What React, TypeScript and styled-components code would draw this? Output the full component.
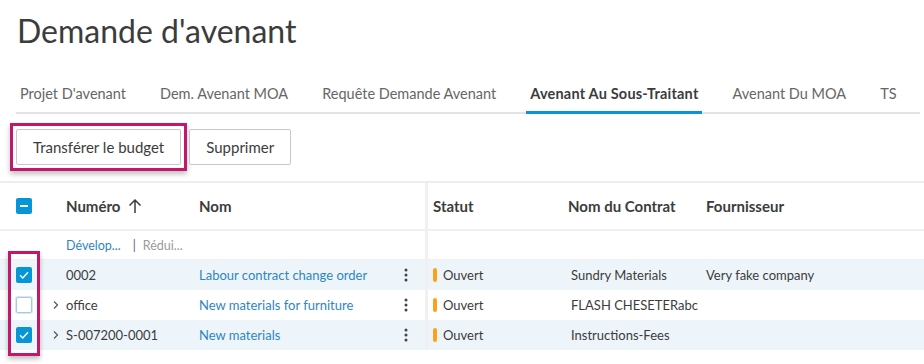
import React from 'react';
import styled, { createGlobalStyle } from 'styled-components';

const GlobalStyle = createGlobalStyle`
    body {
        margin: 0;
        background: #ffffff;
        font-family: Lato, "Noto Sans", sans-serif;
        color: #3c3c3c;
    }
`;

const COLS = '48px 16px 133px 198px 30px 3px 138px 138px 1fr';

const Page = styled.div`
    width: 924px;
    height: 364px;
    overflow: hidden;
    position: relative;
`;

const Title = styled.h1`
    margin: 0;
    padding: 11px 0 0 17px;
    font-size: 32px;
    line-height: 40px;
    font-weight: 400;
    color: #3c3c3c;
`;

const Tabs = styled.div`
    display: flex;
    margin: 28px 4px 0 16px;
    border-bottom: 2px solid #e3e3e3;
    height: 33px;
`;

const Tab = styled.div<{ active?: boolean }>`
    padding: 0 4px;
    margin-right: 26px;
    font-size: 14.5px;
    line-height: 30px;
    font-weight: ${p => (p.active ? 700 : 400)};
    letter-spacing: ${p => (p.active ? '0.2px' : '0')};
    color: ${p => (p.active ? '#3c3c3c' : '#666666')};
    border-bottom: 3px solid ${p => (p.active ? '#0696d7' : 'transparent')};
    margin-bottom: -2px;
    white-space: nowrap;
`;

const Toolbar = styled.div`
    display: flex;
    align-items: flex-start;
    gap: 2px;
    padding: 9px 0 0 10px;
    height: 67px;
    box-sizing: border-box;
`;

const Highlight = styled.div`
    border: 3px solid #c2186b;
    padding: 3px;
    box-shadow: 0 3px 5px rgba(0, 0, 0, 0.25);
`;

const Button = styled.button`
    height: 36px;
    padding: 0 16px;
    background: #ffffff;
    border: 1px solid #c8c8c8;
    border-radius: 2px;
    font-family: inherit;
    font-size: 15px;
    color: #3c3c3c;
`;

const PlainButton = styled(Button)`
    margin-top: 6px;
`;

const Table = styled.div`
    position: relative;
    border-top: 2px solid #eeeeee;
`;

const Row = styled.div<{ selected?: boolean; height: number }>`
    display: grid;
    grid-template-columns: ${COLS};
    align-items: center;
    height: ${p => p.height}px;
    background: ${p => (p.selected ? '#edf5fb' : '#ffffff')};
    font-size: 13px;
`;

const HeadRow = styled(Row)`
    font-weight: 700;
    font-size: 15px;
    border-bottom: 2px solid #f0f0f0;
`;

const ToolsRow = styled(Row)`
    font-size: 12.5px;
    border-bottom: 1px solid #f0f0f0;
`;

const Cell = styled.div`
    display: flex;
    align-items: center;
    white-space: nowrap;
    overflow: hidden;
    padding-left: 2px;
`;

const CheckCell = styled.div`
    display: flex;
    padding-left: 16px;
`;

const Divider = styled.div`
    align-self: stretch;
    background: #f0f0f0;
`;

const Check = styled.div<{ state: 'on' | 'off' | 'some' }>`
    width: 16px;
    height: 16px;
    box-sizing: border-box;
    border-radius: 2px;
    display: flex;
    align-items: center;
    justify-content: center;
    background: ${p => (p.state === 'off' ? '#ffffff' : '#0696d7')};
    border: ${p => (p.state === 'off' ? '1px solid #a9c9de' : 'none')};
    box-shadow: ${p => (p.state === 'off' ? '0 0 0 1px #d6e9f5' : 'none')};
`;

const Link = styled.span<{ muted?: boolean }>`
    color: ${p => (p.muted ? '#9a9a9a' : '#2e86c1')};
`;

const Sep = styled.span`
    color: #666;
    margin: 0 7px 0 12px;
`;

const StatusBar = styled.span`
    width: 4px;
    height: 14px;
    border-radius: 2px;
    background: #faa21b;
    margin: 0 6px 0 3px;
`;

const Kebab = styled.div`
    display: flex;
    justify-content: flex-start;
    padding-left: 9px;
`;

const Frame = styled.div`
    position: absolute;
    left: 8px;
    top: 68px;
    width: 32px;
    height: 105px;
    box-sizing: border-box;
    border: 3px solid #c2186b;
    box-shadow: 0 3px 5px rgba(0, 0, 0, 0.25);
`;

const CheckMark = () => (
    <svg width="12" height="12" viewBox="0 0 12 12">
        <path d="M2 6.2 L4.8 9 L10 3.2" fill="none" stroke="#fff" strokeWidth="1.4" />
    </svg>
);

const Minus = () => (
    <svg width="12" height="12" viewBox="0 0 12 12">
        <rect x="2" y="5" width="8" height="2" fill="#fff" />
    </svg>
);

const Chevron = () => (
    <svg width="8" height="10" viewBox="0 0 8 10">
        <path d="M2 1.5 L5.5 5 L2 8.5" fill="none" stroke="#555" strokeWidth="1.2" />
    </svg>
);

const Dots = () => (
    <svg width="4" height="14" viewBox="0 0 4 14">
        <circle cx="2" cy="2" r="1.5" fill="#444" />
        <circle cx="2" cy="7" r="1.5" fill="#444" />
        <circle cx="2" cy="12" r="1.5" fill="#444" />
    </svg>
);

const ArrowUp = () => (
    <svg width="14" height="16" viewBox="0 0 14 16" style={{ marginLeft: 8 }}>
        <path d="M7 15 V2 M1.5 7.5 L7 2 L12.5 7.5" fill="none" stroke="#3c3c3c" strokeWidth="1.5" />
    </svg>
);

interface Item {
    num: string;
    name: string;
    contract: string;
    supplier: string;
    checked: boolean;
    expandable: boolean;
}

const ITEMS: Item[] = [
    { num: '0002', name: 'Labour contract change order', contract: 'Sundry Materials', supplier: 'Very fake company', checked: true, expandable: false },
    { num: 'office', name: 'New materials for furniture', contract: 'FLASH CHESETERabc', supplier: '', checked: false, expandable: true },
    { num: 'S-007200-0001', name: 'New materials', contract: 'Instructions-Fees', supplier: '', checked: true, expandable: true },
];

const TABS = ["Projet D'avenant", 'Dem. Avenant MOA', 'Requête Demande Avenant', 'Avenant Au Sous-Traitant', 'Avenant Du MOA', 'TS'];

export default function App() {
    return (
        <Page>
            <GlobalStyle />
            <Title>Demande d'avenant</Title>
            <Tabs>
                {TABS.map(t => (
                    <Tab key={t} active={t === 'Avenant Au Sous-Traitant'}>{t}</Tab>
                ))}
            </Tabs>
            <Toolbar>
                <Highlight>
                    <Button>Transférer le budget</Button>
                </Highlight>
                <PlainButton>Supprimer</PlainButton>
            </Toolbar>
            <Table>
                <HeadRow height={46}>
                    <CheckCell><Check state="some"><Minus /></Check></CheckCell>
                    <div />
                    <Cell>Numéro<ArrowUp /></Cell>
                    <Cell>Nom</Cell>
                    <div />
                    <Divider />
                    <Cell style={{ paddingLeft: 5 }}>Statut</Cell>
                    <Cell>Nom du Contrat</Cell>
                    <Cell>Fournisseur</Cell>
                </HeadRow>
                <ToolsRow height={28}>
                    <div />
                    <div />
                    <Cell style={{ gridColumn: '3 / 5' }}>
                        <Link>Dévelop...</Link>
                        <Sep>|</Sep>
                        <Link muted>Rédui...</Link>
                    </Cell>
                    <div />
                    <Divider />
                </ToolsRow>
                {ITEMS.map(item => (
                    <Row key={item.num} height={30} selected={item.checked}>
                        <CheckCell>
                            <Check state={item.checked ? 'on' : 'off'}>{item.checked && <CheckMark />}</Check>
                        </CheckCell>
                        <Cell style={{ paddingLeft: 4 }}>{item.expandable && <Chevron />}</Cell>
                        <Cell>{item.num}</Cell>
                        <Cell><Link>{item.name}</Link></Cell>
                        <Kebab><Dots /></Kebab>
                        <Divider />
                        <Cell><StatusBar />Ouvert</Cell>
                        <Cell style={{ paddingLeft: 5 }}>{item.contract}</Cell>
                        <Cell>{item.supplier}</Cell>
                    </Row>
                ))}
                <Frame />
            </Table>
        </Page>
    );
}
